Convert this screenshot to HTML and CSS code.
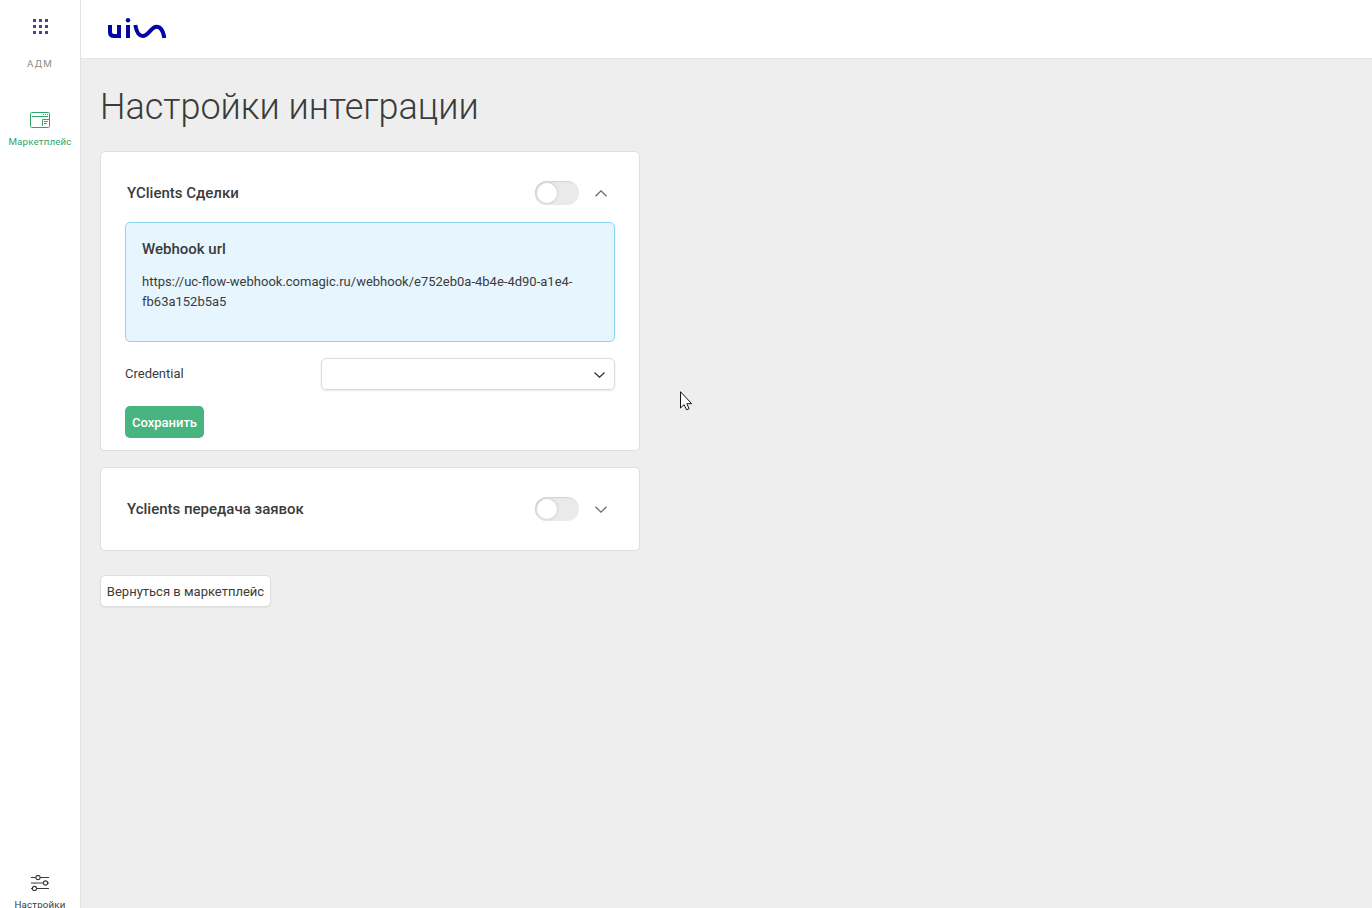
FILE: index.html
```html
<!DOCTYPE html>
<html lang="ru">
<head>
<meta charset="utf-8">
<title>Настройки интеграции</title>
<link rel="stylesheet" href="styles.css">
</head>
<body>
<div class="app">
  <aside class="sidebar">
    <svg class="apps-icon" width="15" height="15" viewBox="0 0 15 15" fill="#533d91"><path d="M0 0h3v3H0zM6 0h3v3H6zM12 0h3v3h-3zM0 6h3v3H0zM6 6h3v3H6zM12 6h3v3h-3zM0 12h3v3H0zM6 12h3v3H6zM12 12h3v3h-3z"/></svg>
    <div class="account">АДМ</div>
    <a class="nav-item nav-market">
      <svg width="20" height="16" viewBox="0 0 20 16" fill="none" stroke="#2fa56b"><rect x=".5" y=".5" width="19" height="15" rx="1"/><path d="M2 4.500h16M13 2.500h1M15 2.500h1M17 2.500h1M12.500 14V7.500H19M14 9.500h4M14 11.500h3"/></svg>
      <span>Маркетплейс</span>
    </a>
    <a class="nav-item nav-settings">
      <svg width="18" height="16" viewBox="0 0 18 16" fill="#fff" stroke="#3b3b3b" stroke-width="1.100"><path d="M0 2.500h18M0 8h18M0 13.500h18"/><circle cx="7" cy="2.500" r="2.100"/><circle cx="14.500" cy="8" r="2.100"/><circle cx="3.500" cy="13.500" r="2.100"/></svg>
      <span>Настройки</span>
    </a>
  </aside>
  <div class="page">
    <header class="topbar">
      <svg width="59" height="21" viewBox="0 0 59 21" fill="none" stroke="#0505a5" stroke-width="4"><path d="M2 7v7.200Q2 18 6 18H11M11 7v13M20 7v13"/><circle cx="20" cy="2.200" r="2.200" fill="#0505a5" stroke="none"/><path d="M27.300 7C28.500 14 31 18 34.800 18C40.500 18 43 8.800 48.500 8.800C52.500 8.800 55.200 13 56.300 20"/></svg>
    </header>
    <main class="content">
      <h1>Настройки интеграции</h1>
      <section class="card card-open">
        <div class="card-head">
          <h2>YClients Сделки</h2>
          <span class="toggle"><span class="knob"></span></span>
          <svg class="chevron" width="12" height="7" viewBox="0 0 12 7"><path d="M.5 6.200L6 .9l5.500 5.300"/></svg>
        </div>
        <div class="webhook">
          <h3>Webhook url</h3>
          <p>https://uc-flow-webhook.comagic.ru/webhook/e752eb0a-4b4e-4d90-a1e4-<br>fb63a152b5a5</p>
        </div>
        <div class="field">
          <label>Credential</label>
          <div class="select"><svg class="chevron chevron-dark" width="11" height="6" viewBox="0 0 11 6"><path d="M.5.5l5 4.800 5-4.800"/></svg></div>
        </div>
        <button class="btn btn-save">Сохранить</button>
      </section>
      <section class="card card-closed">
        <div class="card-head">
          <h2>Yclients передача заявок</h2>
          <span class="toggle"><span class="knob"></span></span>
          <svg class="chevron" width="12" height="7" viewBox="0 0 12 7"><path d="M.5.8L6 6.100 11.500.8"/></svg>
        </div>
      </section>
      <button class="btn btn-back">Вернуться в маркетплейс</button>
    </main>
  </div>
  <svg class="cursor" width="13" height="20" viewBox="0 0 13 20"><path d="M.5.700v16.300l3.600-3.400 2.500 5.200 2.500-1.100-2.300-5h4.900z" fill="#fff" stroke="#15151f"/></svg>
</div>
</body>
</html>
```

FILE: styles.css
```css
* { box-sizing: border-box; }
body { margin: 0; font: 13px/20px Roboto, sans-serif; color: #3b3b3b; background: #eee; }
h1, h2, h3, p { margin: 0; }
svg { display: block; flex: none; }
.app { display: flex; height: 908px; overflow: hidden; }
.sidebar { width: 81px; flex: none; display: flex; flex-direction: column; align-items: center; background: #fff; border-right: 1px solid #e2e2e2; padding-top: 19px; }
.apps-icon { margin-left: 1px; }
.account { margin-top: 24px; font-size: 9.75px; line-height: 12px; letter-spacing: 1.2px; color: #8e8d82; }
.nav-item { display: flex; flex-direction: column; align-items: center; font-size: 9.75px; line-height: 12px; white-space: nowrap; letter-spacing: .15px; }
.nav-market { margin-top: 42px; color: #2fa56b; gap: 8px; }
.nav-settings { margin-top: auto; margin-bottom: -3px; gap: 8px; }
.page { flex: 1; display: flex; flex-direction: column; }
.topbar { height: 59px; background: #fff; border-bottom: 1px solid #e6e6e6; padding: 18px 27px; }
.content { padding: 25px 19px; display: flex; flex-direction: column; align-items: flex-start; }
h1 { font-size: 36px; line-height: 46px; font-weight: 300; margin-bottom: 21px; white-space: nowrap; }
.card { width: 540px; background: #fff; border: 1px solid #dedede; border-radius: 5px; padding: 0 24px; }
.card-open { height: 300px; }
.card-closed { height: 84px; margin-top: 16px; }
.card-head { display: flex; align-items: center; height: 82px; padding: 0 8px 0 2px; }
h2, h3 { font-size: 15px; line-height: 20px; font-weight: 500; }
h2 { flex: 1; }
.toggle { width: 44px; height: 24px; border-radius: 12px; background: #eaeaea; box-shadow: inset 1px 1px 1px #d2d2d2; padding: 2px; margin-right: 16px; }
.knob { display: block; width: 20px; height: 20px; border-radius: 50%; background: #fff; box-shadow: 0 0 2px 1px #d5d5d5; }
.chevron { fill: none; stroke: #666; stroke-width: 1.200; }
.chevron-dark { stroke: #333; }
.webhook { height: 120px; margin-top: -12px; padding: 16px; background: #e7f5ff; border: 1px solid #8ad4f5; border-radius: 5px; }
.webhook p { margin-top: 13px; white-space: nowrap; }
.field { display: flex; align-items: center; justify-content: space-between; margin-top: 16px; height: 32px; }
.select { width: 294px; height: 32px; border: 1px solid #dcdcdc; border-radius: 5px; box-shadow: 0 1px 2px #e8e8e8; display: flex; align-items: center; justify-content: flex-end; padding: 1px 9px 0; }
.btn { font: 13px/20px Roboto, sans-serif; height: 32px; padding: 2px 0 0; border-radius: 5px; white-space: nowrap; }
.btn-save { width: 79px; margin-top: 16px; border: 0; background: #48b47f; color: #fff; font-weight: 500; display: block; }
.btn-back { width: 171px; margin-top: 24px; border: 1px solid #dedede; background: #fff; color: #3b3b3b; box-shadow: 0 1px 1px #e2e2e2; }
.cursor { position: absolute; left: 680px; top: 391px; }
```
